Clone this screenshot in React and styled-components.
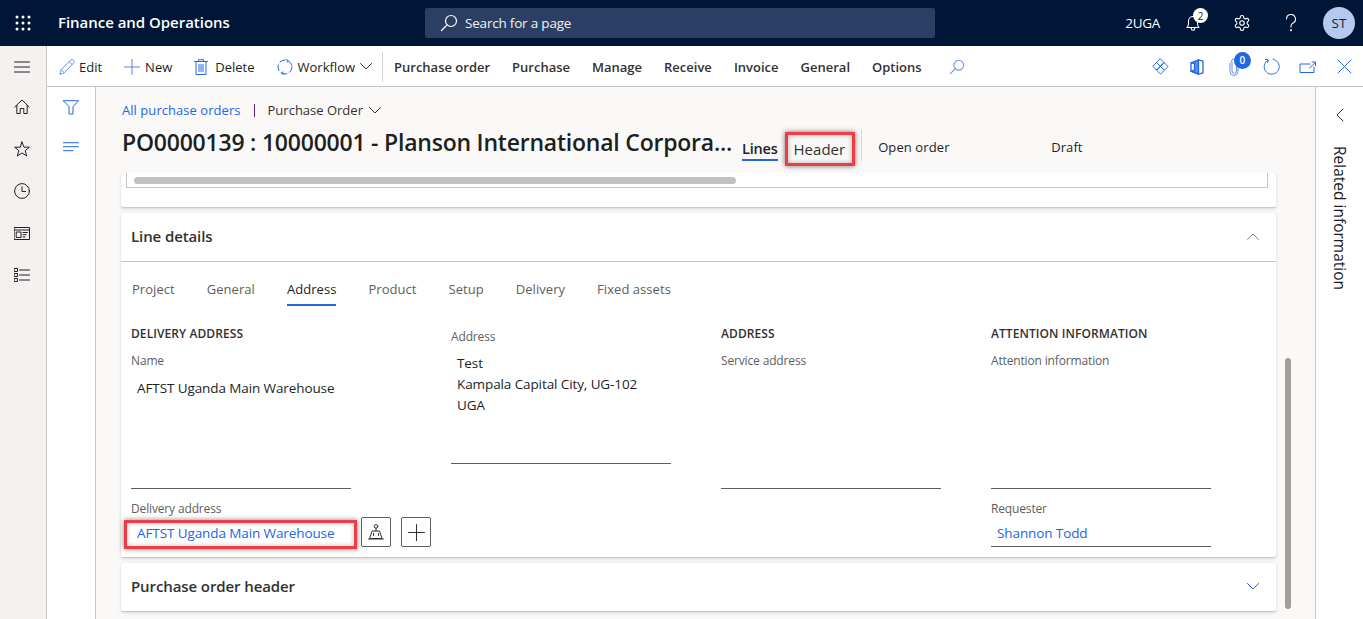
import React from 'react';
import styled, { createGlobalStyle } from 'styled-components';

const GlobalStyle = createGlobalStyle`
  html, body {
    margin: 0;
    padding: 0;
    height: 100%;
    overflow: hidden;
    font-family: "Open Sans", "Noto Sans", sans-serif;
    color: #201f1e;
  }
  * { box-sizing: border-box; }
`;

const BLUE = '#2266e3';

const Page = styled.div`
  width: 1363px;
  height: 619px;
  display: flex;
  flex-direction: column;
  overflow: hidden;
  background: #ffffff;
`;

/* top navy bar */
const TopBar = styled.header`
  flex: none;
  height: 46px;
  display: grid;
  grid-template-columns: 425px 510px 1fr;
  align-items: center;
  background: #001636;
  color: #ffffff;
`;

const Brand = styled.div`
  display: flex;
  align-items: center;
  padding-left: 15px;
  gap: 27px;
`;

const BrandName = styled.span`
  font-size: 15px;
  font-weight: 600;
  letter-spacing: -0.03px;
  margin-top: -2px;
`;

const SearchBox = styled.div`
  height: 30px;
  display: flex;
  align-items: center;
  gap: 7px;
  padding-left: 15px;
  background: #2a3f63;
  border-radius: 2px;
  font-size: 13.5px;
  letter-spacing: -0.2px;
  color: #f3f2f1;
`;

const TopActions = styled.div`
  display: flex;
  align-items: center;
  justify-content: flex-end;
  padding-right: 8px;
`;

const CompanyCode = styled.span`
  font-size: 13.5px;
  letter-spacing: -0.3px;
  margin-right: 8px;
`;

const TopIcon = styled.span`
  position: relative;
  width: 49px;
  height: 32px;
  display: flex;
  align-items: center;
  justify-content: center;
`;

const Badge = styled.span`
  position: absolute;
  top: ${p => p.$top}px;
  left: ${p => p.$left}px;
  width: ${p => p.$size}px;
  height: ${p => p.$size}px;
  border-radius: 50%;
  display: flex;
  align-items: center;
  justify-content: center;
  font-size: 10px;
  font-weight: ${p => p.$bold ? 600 : 400};
  background: ${p => p.$bg};
  color: ${p => p.$fg};
`;

const Avatar = styled.span`
  width: 32px;
  height: 32px;
  margin-left: 8px;
  border-radius: 50%;
  display: flex;
  align-items: center;
  justify-content: center;
  font-size: 13.5px;
  background: #b4c9f0;
  color: #201f1e;
`;

const Body = styled.div`
  flex: 1;
  min-height: 0;
  display: flex;
`;

const LeftNav = styled.nav`
  flex: none;
  width: 47px;
  display: flex;
  flex-direction: column;
  align-items: center;
  background: #f3f2f1;
  border-right: 1px solid #c8c6c4;
`;

const NavItem = styled.span`
  width: 46px;
  height: ${p => p.$first ? 40 : 42}px;
  padding: ${p => p.$first ? 2 : 0}px 2px 0 0;
  display: flex;
  align-items: center;
  justify-content: center;
`;

const Main = styled.div`
  flex: 1;
  min-width: 0;
  display: flex;
  flex-direction: column;
`;

/* action pane */
const ActionBar = styled.div`
  flex: none;
  height: 41px;
  display: flex;
  align-items: center;
  padding: 1px 0 0 12px;
  border-bottom: 1px solid #c8c6c4;
  font-size: 13px;
`;

const ActionButton = styled.span`
  display: flex;
  align-items: center;
  gap: ${p => p.$gap ?? 4}px;
  margin-left: ${p => p.$ml ?? 0}px;
  margin-right: ${p => p.$mr ?? 22}px;
  white-space: nowrap;
`;

const ActionDivider = styled.span`
  width: 1px;
  height: 30px;
  background: #d8d6d4;
  margin: 0 11px 0 10px;
`;

const ActionMenu = styled.span`
  font-weight: 600;
  margin-right: 22px;
  white-space: nowrap;
  color: #323130;
`;

const ActionRight = styled.div`
  margin-left: auto;
  display: flex;
  align-items: center;
`;

const ActionIcon = styled.span`
  position: relative;
  width: 36.8px;
  height: 30px;
  display: flex;
  align-items: center;
  justify-content: center;
`;

const Workspace = styled.div`
  flex: 1;
  min-height: 0;
  display: flex;
`;

const FilterRail = styled.aside`
  flex: none;
  width: 49px;
  padding-top: 1px;
  display: flex;
  flex-direction: column;
  align-items: center;
  border-right: 1px solid #c8c6c4;
`;

const RailItem = styled.span`
  height: 39px;
  width: 100%;
  display: flex;
  align-items: center;
  justify-content: center;
`;

const Content = styled.main`
  flex: 1;
  min-width: 0;
  display: flex;
  flex-direction: column;
  background: #faf9f8;
`;

const PageHead = styled.div`
  flex: none;
  height: 86px;
  padding: 13px 0 0 26px;
`;

const Breadcrumb = styled.div`
  height: 20px;
  display: flex;
  align-items: center;
  font-size: 13px;
`;

const CrumbLink = styled.span`
  color: ${BLUE};
  letter-spacing: 0.05px;
`;

const CrumbBar = styled.span`
  width: 1px;
  height: 13px;
  margin: 0 13px;
  background: #6b1e5e;
`;

const CrumbCurrent = styled.span`
  display: flex;
  align-items: center;
  gap: 6px;
  color: #323130;
`;

const TitleRow = styled.div`
  height: 42px;
  margin-top: 2px;
  display: flex;
  align-items: center;
`;

const Title = styled.h1`
  margin: -2px 0 0;
  width: 620px;
  font-size: 23px;
  font-weight: 600;
  letter-spacing: -0.22px;
  white-space: nowrap;
`;

const ViewTab = styled.span`
  position: relative;
  align-self: flex-start;
  margin-top: 10px;
  height: 34px;
  display: flex;
  align-items: center;
  padding-bottom: 2px;
  font-size: 15px;
  font-weight: ${p => p.$active ? 600 : 400};
  ${p => p.$active && `
    font-size: 14.5px;
    letter-spacing: -0.2px;
    &::after {
      content: '';
      position: absolute;
      left: 0;
      right: 0;
      bottom: 5px;
      height: 2px;
      background: ${BLUE};
    }
  `}
  ${p => p.$marked && `
    color: #323130;
    margin-left: 7px;
    padding: 0 7px 0 6px;
    border: 3px solid #ee3d44;
    box-shadow: 0 0 5px rgba(0, 0, 0, 0.55), inset 0 0 5px rgba(0, 0, 0, 0.3);
  `}
`;

const TabDivider = styled.span`
  align-self: flex-start;
  width: 1px;
  height: 31px;
  margin: 8px 16px 0 6px;
  background: #d8d6d4;
`;

const OrderState = styled.span`
  font-size: 13px;
  letter-spacing: 0.1px;
  margin-top: 8px;
  width: ${p => p.$w}px;
`;

const ScrollArea = styled.div`
  position: relative;
  flex: 1;
  min-height: 0;
  overflow: hidden;
  padding: 0 39px 0 25px;
  display: flex;
  flex-direction: column;
  gap: 6px;
`;

const ScrollThumb = styled.span`
  position: absolute;
  left: 1189px;
  top: 185px;
  width: 6px;
  height: 251px;
  border-radius: 3px;
  background: #a19f9d;
`;

const Card = styled.section`
  flex: none;
  background: #ffffff;
  border-radius: 2px;
  box-shadow: 0 1.6px 3.6px rgba(0, 0, 0, 0.13), 0 0.3px 0.9px rgba(0, 0, 0, 0.11);
`;

const GridStub = styled.div`
  height: 34px;
  padding: 0 8px 19px 5px;
`;

const GridFrame = styled.div`
  height: 15px;
  padding: 4px 0 0 7px;
  border: 1px solid #c8c6c4;
  border-top: 0;
`;

const GridThumb = styled.div`
  width: 602px;
  height: 7px;
  border-radius: 4px;
  background: #c1c1c1;
`;

const CardHeader = styled.div`
  height: ${p => p.$h}px;
  display: flex;
  align-items: center;
  justify-content: space-between;
  padding: 0 17px 2px 10px;
  font-size: 15px;
  font-weight: 600;
  letter-spacing: -0.1px;
  color: #323130;
  border-bottom: ${p => p.$open ? '1px solid #c8c6c4' : '0'};
`;

const TabBar = styled.div`
  height: 44px;
  display: flex;
  align-items: stretch;
  gap: 32px;
  padding-left: 11px;
`;

const Tab = styled.span`
  position: relative;
  display: flex;
  align-items: flex-end;
  padding-bottom: 8px;
  font-size: 13px;
  letter-spacing: 0.05px;
  color: ${p => p.$active ? '#201f1e' : '#605e5c'};
  ${p => p.$active && `
    &::after {
      content: '';
      position: absolute;
      left: 0;
      right: 0;
      bottom: 0;
      height: 2px;
      background: ${BLUE};
    }
  `}
`;

const Columns = styled.div`
  height: 251px;
  padding: 18px 0 0 10px;
  display: grid;
  grid-template-columns: 320px 270px 270px 270px;
`;

const Column = styled.div`
  display: flex;
  flex-direction: column;
  align-items: flex-start;
`;

const GroupTitle = styled.div`
  height: 18px;
  margin-bottom: 9px;
  display: flex;
  align-items: center;
  font-size: 12px;
  font-weight: 600;
  letter-spacing: 0.08px;
  text-transform: uppercase;
  color: #323130;
`;

const Label = styled.div`
  height: 18px;
  margin-top: ${p => p.$mt || 0}px;
  display: flex;
  align-items: center;
  font-size: 12px;
  letter-spacing: -0.15px;
  color: #605e5c;
`;

const TextBlock = styled.div`
  width: 220px;
  height: ${p => p.$h}px;
  padding: ${p => p.$pt}px 6px 0;
  font-size: 13.5px;
  line-height: 21px;
  letter-spacing: -0.1px;
  border-bottom: 1px solid #605e5c;
`;

const LookupRow = styled.div`
  display: flex;
  align-items: flex-start;
  gap: 10px;
`;

const LookupField = styled.div`
  position: relative;
  width: 220px;
  height: 30px;
  padding: 6px 6px 0;
  font-size: 13.5px;
  line-height: 21px;
  letter-spacing: -0.1px;
  color: ${BLUE};
  border-bottom: 1px solid #605e5c;
  ${p => p.$marked && `
    &::after {
      content: '';
      position: absolute;
      inset: 3px -6px -3px -7px;
      border: 3px solid #ee3d44;
      box-shadow: 0 0 5px rgba(0, 0, 0, 0.5), inset 0 0 5px rgba(0, 0, 0, 0.25);
    }
  `}
`;

const SquareButton = styled.span`
  width: 30px;
  height: 30px;
  display: flex;
  align-items: center;
  justify-content: center;
  border: 1px solid #605e5c;
  border-radius: 2px;
`;

const RelatedPanel = styled.aside`
  flex: none;
  width: 48px;
  padding-top: 21px;
  display: flex;
  flex-direction: column;
  align-items: center;
  border-left: 1px solid #c8c6c4;
`;

const RelatedLabel = styled.span`
  margin-top: 24px;
  writing-mode: vertical-rl;
  font-size: 15.5px;
  white-space: nowrap;
`;

const Svg = ({ size = 16, w, h, box, color = 'currentColor', sw = 1, children }) => (
  <svg width={w || size} height={h || size} viewBox={box || `0 0 ${w || size} ${h || size}`} fill="none" stroke={color} strokeWidth={sw} strokeLinecap="round" strokeLinejoin="round">
    {children}
  </svg>
);

const Waffle = () => (
  <svg width="16" height="16" viewBox="0 0 16 16" fill="#ffffff">
    {[2, 8, 14].flatMap(y => [2, 8, 14].map(x => <circle key={`${x}-${y}`} cx={x} cy={y} r="1.5" />))}
  </svg>
);

const Glass = ({ color, size = 18 }) => (
  <Svg box="0 0 18 18" size={size} color={color} sw={1.2}>
    <circle cx="11" cy="7" r="5.5" />
    <path d="M7 11 L1.5 16.5" />
  </Svg>
);

const Bell = () => (
  <Svg box="0 0 16 18" w={16} h={18} color="#ffffff" sw={1.1}>
    <path d="M2 13.5c1-1 1.5-2 1.5-4V7a4.5 4.5 0 0 1 9 0v2.5c0 2 .5 3 1.5 4Z" />
    <path d="M6.3 13.5v1a1.7 1.7 0 0 0 3.4 0v-1" />
  </Svg>
);

const Gear = () => (
  <Svg box="0 0 24 24" size={18} color="#ffffff" sw={1.5}>
    <path d="M12.2 2h-.4a2 2 0 0 0-2 2v.2a2 2 0 0 1-1 1.7l-.4.3a2 2 0 0 1-2 0l-.2-.1a2 2 0 0 0-2.7.7l-.2.4a2 2 0 0 0 .7 2.7l.2.1a2 2 0 0 1 1 1.7v.5a2 2 0 0 1-1 1.7l-.2.1a2 2 0 0 0-.7 2.7l.2.4a2 2 0 0 0 2.7.7l.2-.1a2 2 0 0 1 2 0l.4.3a2 2 0 0 1 1 1.7v.2a2 2 0 0 0 2 2h.4a2 2 0 0 0 2-2v-.2a2 2 0 0 1 1-1.7l.4-.3a2 2 0 0 1 2 0l.2.1a2 2 0 0 0 2.7-.7l.2-.4a2 2 0 0 0-.7-2.7l-.2-.1a2 2 0 0 1-1-1.7v-.5a2 2 0 0 1 1-1.7l.2-.1a2 2 0 0 0 .7-2.7l-.2-.4a2 2 0 0 0-2.7-.7l-.2.1a2 2 0 0 1-2 0l-.4-.3a2 2 0 0 1-1-1.7V4a2 2 0 0 0-2-2Z" />
    <circle cx="12" cy="12" r="3" />
  </Svg>
);

const Help = () => (
  <Svg box="0 0 12 18" w={12} h={18} color="#ffffff" sw={1.1}>
    <path d="M1.5 5a4.5 4.5 0 1 1 6.6 4c-1.5.8-2.1 1.6-2.1 3v1" />
    <circle cx="6" cy="16.2" r=".5" />
  </Svg>
);

const Chevron = ({ up, left, color = '#323130', size = 12 }) => {
  if (left) {
    return <Svg box="0 0 8 14" w={8} h={14} color={color}><path d="M7 1 L1 7 L7 13" /></Svg>;
  }
  return (
    <Svg box="0 0 12 7" w={size} h={size * 7 / 12} color={color}>
      <path d={up ? 'M.5 6.5 L6 1 L11.5 6.5' : 'M.5 .5 L6 6 L11.5 .5'} />
    </Svg>
  );
};

const Hamburger = () => (
  <Svg w={16} h={12} color="#201f1e"><path d="M.5 1h15M.5 6h15M.5 11h15" /></Svg>
);
const Home = () => (
  <Svg box="0 0 16 16" color="#201f1e"><path d="M.8 8 L8 1 L15.2 8 M2.8 6.4 V14.5 H6.2 V9.5 H9.8 V14.5 H13.2 V6.4" /></Svg>
);
const Star = () => (
  <Svg box="0 0 16 16" color="#201f1e"><path d="M8 1 L10 6.2 L15.4 6.2 L11.2 9.6 L12.7 15 L8 11.9 L3.3 15 L4.8 9.6 L.6 6.2 L6 6.2 Z" /></Svg>
);
const Clock = () => (
  <Svg box="0 0 16 16" color="#201f1e"><circle cx="8" cy="8" r="7.4" /><path d="M8 3.8 V8.5 H11.5" /></Svg>
);
const Panel = () => (
  <Svg box="0 0 16 13" w={16} h={13} color="#201f1e">
    <rect x=".5" y=".5" width="15" height="12" />
    <path d="M.5 3h15" />
    <rect x="2.6" y="5" width="4.4" height="5.5" />
    <path d="M9 5.5h4.4M9 7.7h3M9 10h2" />
  </Svg>
);
const Checklist = () => (
  <Svg box="0 0 16 14" w={16} h={14} color="#201f1e">
    <rect x=".5" y=".5" width="3" height="3" />
    <rect x=".5" y="5.5" width="3" height="3" />
    <rect x=".5" y="10.5" width="3" height="3" />
    <path d="M5.5 2h10M5.5 7h10M5.5 12h10" />
  </Svg>
);
const Funnel = () => (
  <Svg box="0 0 16 15" w={16} h={15} color={BLUE}><path d="M.5 .7h15L10 6.8V14H6V6.8Z" /></Svg>
);
const Lines = () => (
  <Svg w={16} h={10} color={BLUE}><path d="M.5 .7h15M.5 4.7h15M.5 8.7h9.5" /></Svg>
);
const Pencil = () => (
  <Svg box="0 0 16 16" color="#6d8fe8"><path d="M1 15 L2.2 10.6 L11.6 1.2 a1.8 1.8 0 0 1 2.9 2.9 L5.2 13.7 Z M2.2 10.6 L5.2 13.7 M10.2 2.6 L13.1 5.6" /></Svg>
);
const PlusMark = ({ color = '#5f86e6', size = 16 }) => (
  <Svg box="0 0 16 16" size={size} color={color}><path d="M8 .5v15M.5 8h15" /></Svg>
);
const Trash = () => (
  <Svg box="0 0 14 16" w={14} h={16} color={BLUE}>
    <path d="M.5 2.5h13M4.5 2.5v-1.8h5v1.8M2 2.5v13h10v-13M5 5.5v7M7 5.5v7M9 5.5v7" />
  </Svg>
);
const Flow = () => (
  <Svg box="0 0 16 16" color={BLUE}>
    <circle cx="8" cy="8" r="7" strokeDasharray="6 3" />
    <path d="M9.5 .6 L11.2 1.6 L10.2 3.2 M6.5 15.4 L4.8 14.4 L5.8 12.8" />
  </Svg>
);
const Diamonds = () => (
  <Svg box="0 0 18 18" size={17} color={BLUE}>
    <path d="M9 1 L13 5 L9 9 L5 5 Z M13 5 L17 9 L13 13 L9 9 Z M9 9 L13 13 L9 17 L5 13 Z M5 5 L9 9 L5 13 L1 9 Z" />
  </Svg>
);
const Office = () => (
  <Svg box="0 0 14 16" w={14} h={16} color={BLUE} sw={1.3}>
    <path d="M1 3.8 L8.5 .8 L13 2.2 V13.8 L8.5 15.2 L1 12.2 Z" />
    <path d="M8.5 .8 V15.2 L1 12.2 L4.5 11 V4.6 L1 3.8" fill="#2266e3" fillOpacity="0.75" />
  </Svg>
);
const Clip = () => (
  <Svg box="0 0 10 18" w={10} h={18} color="#6d8fe8">
    <path d="M3 4v9a2.3 2.3 0 0 0 4.6 0V3.5a2.6 2.6 0 0 0-5.2 0" />
    <path d="M1 5v8.5a4 4 0 0 0 8 0V6" />
  </Svg>
);
const Refresh = () => (
  <Svg box="0 0 18 18" size={17} color={BLUE}>
    <path d="M5.5 2A8 8 0 1 0 10.5 1.2" />
    <path d="M2.5 1.5 L5.5 2 L5 5" />
  </Svg>
);
const Popout = () => (
  <Svg box="0 0 18 12" w={18} h={12} color={BLUE}>
    <path d="M11 3H1V11.5H15V6" />
    <path d="M10.5 7 L16.5 1.5 M13 1 H16.5 V4.5" />
  </Svg>
);
const Cross = () => (
  <Svg box="0 0 16 16" size={15} color={BLUE}><path d="M1 1 L15 15 M15 1 L1 15" /></Svg>
);
const Locate = () => (
  <Svg box="0 0 16 16" color="#323130">
    <circle cx="8" cy="2.4" r="1.8" />
    <path d="M8 4.2V7M4.5 7h7L14 14.5H2Z" />
    <path d="M5.5 9.5v2M10.5 9.5v2M.5 15h15" />
  </Svg>
);

const deliveryName = 'AFTST Uganda Main Warehouse';
const tabs = ['Project', 'General', 'Address', 'Product', 'Setup', 'Delivery', 'Fixed assets'];
const menus = ['Purchase order', 'Purchase', 'Manage', 'Receive', 'Invoice', 'General', 'Options'];

export default function App() {
  return (
    <Page>
      <GlobalStyle />
      <TopBar>
        <Brand>
          <Waffle />
          <BrandName>Finance and Operations</BrandName>
        </Brand>
        <SearchBox>
          <Glass color="#ffffff" />
          Search for a page
        </SearchBox>
        <TopActions>
          <CompanyCode>2UGA</CompanyCode>
          <TopIcon>
            <Bell />
            <Badge $top={1} $left={25} $size={15} $bg="#ffffff" $fg="#201f1e">2</Badge>
          </TopIcon>
          <TopIcon><Gear /></TopIcon>
          <TopIcon><Help /></TopIcon>
          <Avatar>ST</Avatar>
        </TopActions>
      </TopBar>
      <Body>
        <LeftNav>
          <NavItem $first><Hamburger /></NavItem>
          <NavItem><Home /></NavItem>
          <NavItem><Star /></NavItem>
          <NavItem><Clock /></NavItem>
          <NavItem><Panel /></NavItem>
          <NavItem><Checklist /></NavItem>
        </LeftNav>
        <Main>
          <ActionBar>
            <ActionButton><Pencil />Edit</ActionButton>
            <ActionButton $gap={5}><PlusMark />New</ActionButton>
            <ActionButton $gap={7}><Trash />Delete</ActionButton>
            <ActionButton $mr={0} $gap={5}><Flow />Workflow<Chevron /></ActionButton>
            <ActionDivider />
            {menus.map(m => <ActionMenu key={m}>{m}</ActionMenu>)}
            <ActionButton $ml={5}><Glass color="#6d8fe8" size={16} /></ActionButton>
            <ActionRight>
              <ActionIcon><Diamonds /></ActionIcon>
              <ActionIcon><Office /></ActionIcon>
              <ActionIcon>
                <Clip />
                <Badge $top={0} $left={18} $size={17} $bg={BLUE} $fg="#ffffff" $bold>0</Badge>
              </ActionIcon>
              <ActionIcon><Refresh /></ActionIcon>
              <ActionIcon><Popout /></ActionIcon>
              <ActionIcon><Cross /></ActionIcon>
            </ActionRight>
          </ActionBar>
          <Workspace>
            <FilterRail>
              <RailItem><Funnel /></RailItem>
              <RailItem><Lines /></RailItem>
            </FilterRail>
            <Content>
              <PageHead>
                <Breadcrumb>
                  <CrumbLink>All purchase orders</CrumbLink>
                  <CrumbBar />
                  <CrumbCurrent>Purchase Order <Chevron /></CrumbCurrent>
                </Breadcrumb>
                <TitleRow>
                  <Title>PO0000139 : 10000001 - Planson International Corpora...</Title>
                  <ViewTab $active>Lines</ViewTab>
                  <ViewTab $marked>Header</ViewTab>
                  <TabDivider />
                  <OrderState $w={173}>Open order</OrderState>
                  <OrderState $w={60}>Draft</OrderState>
                </TitleRow>
              </PageHead>
              <ScrollArea>
                <Card>
                  <GridStub>
                    <GridFrame><GridThumb /></GridFrame>
                  </GridStub>
                </Card>
                <Card>
                  <CardHeader $h={49} $open>Line details <Chevron up color="#8a8886" /></CardHeader>
                  <TabBar>
                    {tabs.map(t => <Tab key={t} $active={t === 'Address'}>{t}</Tab>)}
                  </TabBar>
                  <Columns>
                    <Column>
                      <GroupTitle>Delivery address</GroupTitle>
                      <Label>Name</Label>
                      <TextBlock $h={120} $pt={9}>{deliveryName}</TextBlock>
                      <Label $mt={10}>Delivery address</Label>
                      <LookupRow>
                        <LookupField $marked>{deliveryName}</LookupField>
                        <SquareButton><Locate /></SquareButton>
                        <SquareButton><PlusMark color="#323130" size={17} /></SquareButton>
                      </LookupRow>
                    </Column>
                    <Column>
                      <Label $mt={3}>Address</Label>
                      <TextBlock $h={119} $pt={8}>
                        Test<br />Kampala Capital City, UG-102<br />UGA
                      </TextBlock>
                    </Column>
                    <Column>
                      <GroupTitle>Address</GroupTitle>
                      <Label>Service address</Label>
                      <TextBlock $h={120} $pt={9} />
                    </Column>
                    <Column>
                      <GroupTitle>Attention information</GroupTitle>
                      <Label>Attention information</Label>
                      <TextBlock $h={120} $pt={9} />
                      <Label $mt={10}>Requester</Label>
                      <LookupRow>
                        <LookupField>Shannon Todd</LookupField>
                      </LookupRow>
                    </Column>
                  </Columns>
                </Card>
                <Card>
                  <CardHeader $h={48}>Purchase order header <Chevron color={BLUE} /></CardHeader>
                </Card>
                <ScrollThumb />
              </ScrollArea>
            </Content>
            <RelatedPanel>
              <Chevron left />
              <RelatedLabel>Related information</RelatedLabel>
            </RelatedPanel>
          </Workspace>
        </Main>
      </Body>
    </Page>
  );
}
